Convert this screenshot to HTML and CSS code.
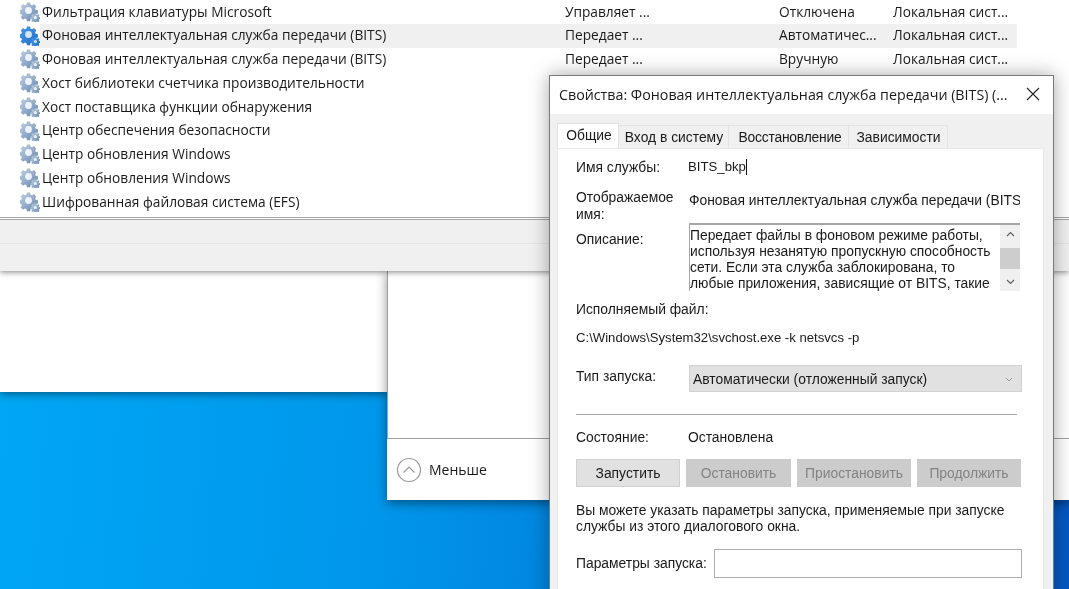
FILE: index.html
```html
<!DOCTYPE html>
<html lang="ru">
<head>
<meta charset="utf-8">
<title>Службы</title>
<link rel="stylesheet" href="styles.css">
</head>
<body>
<svg class="defs" width="0" height="0" aria-hidden="true">
  <defs>
    <linearGradient id="g-off" x1="0" y1="0" x2="1" y2="1">
      <stop offset="0" stop-color="#c3d3e6"/>
      <stop offset=".55" stop-color="#8fa9c8"/>
      <stop offset="1" stop-color="#5f82ad"/>
    </linearGradient>
    <linearGradient id="g-on" x1="0" y1="0" x2="1" y2="1">
      <stop offset="0" stop-color="#4a9be8"/>
      <stop offset="1" stop-color="#1f6cc4"/>
    </linearGradient>
    <path id="cog" d="M-1.600-8h3.200l.5 2.200 1.500.6 1.900-1.200 2.300 2.300-1.200 1.900.6 1.500 2.200.5v3.200l-2.200.5-.6 1.500 1.200 1.900-2.300 2.300-1.900-1.200-1.500.6-.5 2.200h-3.200l-.5-2.200-1.500-.6-1.900 1.200-2.300-2.300 1.200-1.900-.6-1.500-2.200-.5v-3.200l2.200-.5.6-1.500-1.200-1.900 2.300-2.300 1.900 1.200 1.500-.6z"/>
    <g id="gears">
      <use href="#cog" transform="translate(8.500 8.500)"/>
      <circle class="hole" cx="8.500" cy="8.500" r="3.400"/>
      <use href="#cog" transform="translate(15.400 15.400) scale(.52)"/>
      <circle class="hole" cx="15.400" cy="15.400" r="1.500"/>
    </g>
  </defs>
</svg>
<div class="desktop">
  <section class="services">
    <ul class="list">
      <li class="row"><svg class="gear" viewBox="0 0 20 20"><use href="#gears"/></svg><span class="c-name">Фильтрация клавиатуры Microsoft</span><span class="c-desc">Управляет ...</span><span class="c-start">Отключена</span><span class="c-login">Локальная сист...</span></li>
      <li class="row row-on"><svg class="gear gear-on" viewBox="0 0 20 20"><use href="#gears"/></svg><span class="c-name">Фоновая интеллектуальная служба передачи (BITS)</span><span class="c-desc">Передает ...</span><span class="c-start">Автоматичес...</span><span class="c-login">Локальная сист...</span></li>
      <li class="row"><svg class="gear" viewBox="0 0 20 20"><use href="#gears"/></svg><span class="c-name">Фоновая интеллектуальная служба передачи (BITS)</span><span class="c-desc">Передает ...</span><span class="c-start">Вручную</span><span class="c-login">Локальная сист...</span></li>
      <li class="row"><svg class="gear" viewBox="0 0 20 20"><use href="#gears"/></svg><span class="c-name">Хост библиотеки счетчика производительности</span></li>
      <li class="row"><svg class="gear" viewBox="0 0 20 20"><use href="#gears"/></svg><span class="c-name">Хост поставщика функции обнаружения</span></li>
      <li class="row"><svg class="gear" viewBox="0 0 20 20"><use href="#gears"/></svg><span class="c-name">Центр обеспечения безопасности</span></li>
      <li class="row"><svg class="gear" viewBox="0 0 20 20"><use href="#gears"/></svg><span class="c-name">Центр обновления Windows</span></li>
      <li class="row"><svg class="gear" viewBox="0 0 20 20"><use href="#gears"/></svg><span class="c-name">Центр обновления Windows</span></li>
      <li class="row"><svg class="gear" viewBox="0 0 20 20"><use href="#gears"/></svg><span class="c-name">Шифрованная файловая система (EFS)</span></li>
    </ul>
    <div class="band band-a"></div>
    <div class="band band-b"></div>
  </section>

  <section class="white-left"></section>

  <section class="taskmgr">
    <div class="tm-body"></div>
    <div class="tm-foot">
      <svg class="less-ico" width="26" height="26" viewBox="0 0 26 26"><circle cx="13" cy="13" r="11.500"/><path d="M7.500 15.500 13 10l5.500 5.500"/></svg>
      <span>Меньше</span>
    </div>
  </section>

  <section class="dialog">
    <header class="d-title">
      <span>Свойства: Фоновая интеллектуальная служба передачи (BITS) (...</span>
      <svg class="close" width="14" height="14" viewBox="0 0 14 14"><path d="M1 1l12 12M13 1 1 13"/></svg>
    </header>
    <div class="d-main">
      <nav class="tabs">
        <span class="tab tab-on">Общие</span>
        <span class="tab t2">Вход в систему</span>
        <span class="tab t3">Восстановление</span>
        <span class="tab t4">Зависимости</span>
      </nav>
      <div class="panel">
        <div class="f f-name"><span class="lbl">Имя службы:</span><span class="val name-val">BITS_bkp<i class="caret"></i></span></div>
        <div class="f f-disp"><span class="lbl">Отображаемое имя:</span><span class="val clip">Фоновая интеллектуальная служба передачи (BITS)</span></div>
        <div class="f f-desc"><span class="lbl">Описание:</span>
          <div class="area">
            <p>Передает файлы в фоновом режиме работы, используя незанятую пропускную способность сети. Если эта служба заблокирована, то любые приложения, зависящие от BITS, такие</p>
            <div class="sb">
              <svg width="9" height="6" viewBox="0 0 9 6"><path d="M1 5l3.500-3.500L8 5"/></svg>
              <i class="thumb"></i>
              <svg width="9" height="6" viewBox="0 0 9 6"><path d="M1 1l3.500 3.500L8 1"/></svg>
            </div>
          </div>
        </div>
        <div class="exe-l">Исполняемый файл:</div>
        <div class="exe-v">C:\Windows\System32\svchost.exe -k netsvcs -p</div>
        <div class="f f-type"><span class="lbl">Тип запуска:</span>
          <div class="select"><span>Автоматически (отложенный запуск)</span><svg width="8" height="5" viewBox="0 0 8 5"><path d="M1 1l3 3 3-3"/></svg></div>
        </div>
        <hr class="sep">
        <div class="f f-state"><span class="lbl">Состояние:</span><span class="val">Остановлена</span></div>
        <div class="btns">
          <span class="btn b1">Запустить</span>
          <span class="btn off b2">Остановить</span>
          <span class="btn off b3">Приостановить</span>
          <span class="btn off b4">Продолжить</span>
        </div>
        <p class="note">Вы можете указать параметры запуска, применяемые при запуске<br>службы из этого диалогового окна.</p>
        <div class="f f-par"><span class="lbl">Параметры запуска:</span><div class="input"></div></div>
      </div>
    </div>
  </section>
</div>
</body>
</html>
```
FILE: styles.css
```css
* { box-sizing: border-box; }
html, body { margin: 0; height: 100%; overflow: hidden; }
.defs { position: absolute; }
.desktop {
  position: relative;
  width: 1069px;
  height: 589px;
  overflow: hidden;
  background: linear-gradient(95deg, #00a8f5 0%, #0097ea 37%, #0558c2 100%);
  font-family: "Open Sans", sans-serif;
  color: #1a1a1a;
  filter: blur(.3px);
}

/* services window */
.services { position: absolute; left: 0; top: 0; width: 1069px; height: 271px; background: #fff; box-shadow: 0 1px 6px rgba(0,0,0,.5); z-index: 3; }
.list { list-style: none; margin: 0; padding: 0; height: 220px; border-bottom: 3px double #a4a4a4; }
.row { display: flex; align-items: center; height: 23.750px; font-size: 13.720px; position: relative; }
.row-on::before { content: ""; position: absolute; left: 40px; width: 977px; top: 0; bottom: 0; background: #f0f0f0; }
.row > * { position: relative; }
.row > span { top: -.75px; }
.gear { width: 20px; height: 20px; margin-left: 20px; flex: none; fill: url(#g-off); --hole: #eef3f9; }
.gear-on { fill: url(#g-on); --hole: #d5e6f8; }
.hole { fill: var(--hole); }
.c-name { width: 523px; margin-left: 2px; white-space: nowrap; }
.c-desc { width: 214px; }
.c-start { width: 114px; }
.band { background: #f0f0f0; }
.band-a { height: 24px; border-bottom: 1px solid #e4e4e4; }
.band-b { height: 27px; }

/* left white area */
.white-left { position: absolute; left: 0; top: 271px; width: 388px; height: 121px; background: #fff; box-shadow: 0 2px 8px rgba(0,0,0,.45); z-index: 1; }

/* second window behind the dialog */
.taskmgr { position: absolute; left: 387px; top: 271px; width: 682px; height: 229px; background: #fff; box-shadow: 0 3px 10px rgba(0,0,0,.45); z-index: 2; display: flex; flex-direction: column; }
.tm-body { height: 168px; border-bottom: 1px solid #a0a0a0; border-left: 1px solid #a0a0a0; }
.tm-foot { flex: 1; display: flex; align-items: center; gap: 7px; padding: 0 0 0 9px; font-size: 14px; }
.less-ico { flex: none; }
.less-ico circle, .less-ico path { fill: none; stroke: #9a9a9a; stroke-width: 1.200; }

/* properties dialog */
.dialog { position: absolute; left: 549px; top: 75px; width: 505px; height: 540px; background: #f0f0f0; border: 1px solid #7a7a7a; box-shadow: 0 0 18px rgba(0,0,0,.35); z-index: 4; font-family: "Liberation Sans", sans-serif; font-size: 13.850px; color: #1a1a1a; }
.d-title { height: 38px; background: #fff; display: flex; align-items: center; padding: 0 13px 2px 9px; justify-content: space-between; font-family: "Open Sans", sans-serif; font-size: 14.250px; white-space: nowrap; }
.close path { fill: none; stroke: #222; stroke-width: 1.100; }
.d-main { padding: 9px 9px 0 7px; }
.tabs { display: flex; align-items: flex-end; height: 25px; position: relative; }
.tab { display: flex; align-items: center; justify-content: center; height: 23px; padding-left: 1px; background: #f0f0f0; border: 1px solid #e3e3e3; border-bottom: 0; border-left: 0; }
.tab-on { width: 62px; height: 25px; background: #fff; border: 1px solid #e3e3e3; border-bottom: 0; padding: 0 0 3px 2px; }
.t2 { width: 110px; }
.t3 { width: 120px; letter-spacing: -.2px; padding-left: 3px; }
.t4 { width: 99px; }
.panel { background: #fff; height: 460px; width: 487px; border: 1px solid #e8e8e8; padding: 0 0 0 18px; }

.f { display: flex; align-items: flex-start; }
.lbl { width: 112px; flex: none; }
.val { white-space: nowrap; }
.name-val { font-size: 13.200px; line-height: 15px; }
.clip { width: 331px; overflow: hidden; margin-left: 1px; }
.caret { display: inline-block; width: 1px; height: 16px; background: #111; vertical-align: -4px; }
.f-name { margin-top: 10px; height: 17px; }
.f-disp { margin-top: 13px; }
.f-disp .lbl { line-height: 17px; padding-right: 8px; }
.f-disp .val { margin-top: 3px; }
.f-desc { margin-top: 0; }
.f-desc .lbl { padding-top: 8px; }
.area { width: 331px; height: 68px; margin-left: 1px; border-top: 2px solid #a6a6a6; border-left: 1px solid #a6a6a6; display: flex; background: #fff; }
.area p { margin: 0; width: 310px; padding: 1.600px 6px 0 0; height: 66px; overflow: hidden; line-height: 16.300px; }
.sb { width: 20px; height: 66px; background: #f0f0f0; display: flex; flex-direction: column; align-items: center; justify-content: space-between; padding: 6px 0; }
.sb path, .select path { fill: none; stroke: #606060; stroke-width: 1.200; }
.thumb { width: 20px; height: 21px; background: #cdcdcd; margin-top: 5px; margin-bottom: 5px; }
.exe-l { margin-top: 10px; }
.exe-v { margin-top: 13px; font-size: 13.150px; }
.f-type { margin-top: 20px; }
.f-type .lbl { padding-top: 3px; }
.select { width: 333px; height: 27px; margin-left: 1px; background: #e1e1e1; border: 1px solid #d2d2d2; display: flex; align-items: center; justify-content: space-between; padding: 1px 8px 0 3px; }
.select path { stroke: #9a9a9a; stroke-width: 1; }
.sep { margin: 22px 0 0; width: 441px; border: 0; border-top: 1px solid #a6a6a6; height: 0; }
.f-state { margin-top: 14px; }
.btns { display: flex; margin-top: 14px; gap: 6px; }
.btn { height: 28px; display: flex; align-items: center; justify-content: center; background: #e1e1e1; border: 1px solid #d0d0d0; }
.b1 { width: 104px; }
.b2 { width: 105px; }
.b3 { width: 114px; }
.b4 { width: 104px; }
.off { background: #cccccc; border-color: #cccccc; color: #838383; }
.note { margin: 15px 0 0; line-height: 16px; white-space: nowrap; }
.f-par { margin-top: 15px; }
.f-par .lbl { width: 138px; padding-top: 6px; white-space: nowrap; }
.input { width: 308px; height: 29px; background: #fff; border: 1px solid #adadad; }
```
